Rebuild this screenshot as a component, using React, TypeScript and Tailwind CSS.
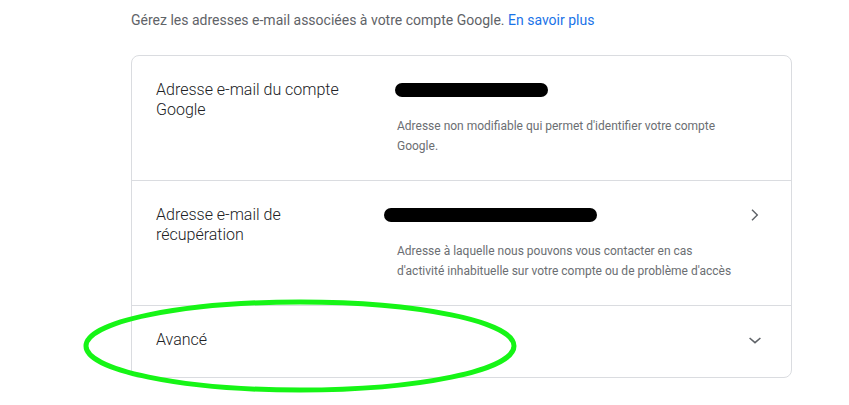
import React from 'react';

function ChevronRight() {
  return (
    <svg width="24" height="24" viewBox="0 0 24 24" className="shrink-0">
      <path d="M9.5 6.2 8.5 7.2 13.3 12l-4.8 4.8 1 1L15.3 12z" fill="#5f6368" />
    </svg>
  );
}

function ChevronDown() {
  return (
    <svg width="24" height="24" viewBox="0 0 24 24" className="shrink-0">
      <path d="M6.6 10 12 14.6 17.4 10" fill="none" stroke="#5f6368" strokeWidth="1.6" />
    </svg>
  );
}

export default function App() {
  return (
    <main
      className="relative min-h-[405px] w-[849px] bg-white text-[#202124]"
      style={{ fontFamily: 'Roboto, "Liberation Sans", Arial, sans-serif' }}
    >
      <div className="pl-[131px] pt-[10px]">
        {/* intro line */}
        <p className="text-sm leading-5 text-[#5f6368]">
          Gérez les adresses e-mail associées à votre compte Google.{' '}
          <a className="text-[#1a73e8]">En savoir plus</a>
        </p>

        {/* card */}
        <div className="mt-[25px] w-[661px] rounded-lg border border-[#dadce0]">
          {/* row 1 */}
          <div className="flex border-b border-[#dadce0] px-6 py-6">
            <div className="w-[241px] shrink-0 pr-8 text-base font-light leading-5">
              Adresse e-mail du compte Google
            </div>
            <div className="flex-1">
              <div className="flex h-5 items-center">
                <div className="ml-[-2px] h-[14px] w-[153px] rounded-full bg-black" />
              </div>
              <p className="mt-4 max-w-[340px] text-xs leading-5 text-[#6b6e72]">
                Adresse non modifiable qui permet d'identifier votre compte Google.
              </p>
            </div>
            <div className="w-6" />
          </div>

          {/* row 2 */}
          <div className="flex border-b border-[#dadce0] px-6 py-6">
            <div className="w-[241px] shrink-0 pr-8 text-base font-light leading-5">
              Adresse e-mail de récupération
            </div>
            <div className="flex-1">
              <div className="flex h-5 items-center">
                <div className="ml-[-13px] h-[14px] w-[213px] rounded-full bg-black" />
              </div>
              <p className="mt-4 max-w-[340px] text-xs leading-5 text-[#6b6e72]">
                Adresse à laquelle nous pouvons vous contacter en cas d'activité inhabituelle sur votre compte ou de problème d'accès
              </p>
            </div>
            <div className="-mt-[2px]">
              <ChevronRight />
            </div>
          </div>

          {/* row 3 */}
          <div className="flex h-[71px] items-start px-6 pt-6">
            <div className="flex-1 text-base font-light leading-5">Avancé</div>
            <div className="-mt-[2px]">
              <ChevronDown />
            </div>
          </div>
        </div>
      </div>

      {/* green annotation circle drawn over the page */}
      <svg
        className="pointer-events-none absolute left-0 top-0"
        width="849"
        height="405"
        viewBox="0 0 849 405"
      >
        <ellipse cx="300" cy="346" rx="214" ry="44" fill="none" stroke="#16f516" strokeWidth="5" />
      </svg>
    </main>
  );
}
